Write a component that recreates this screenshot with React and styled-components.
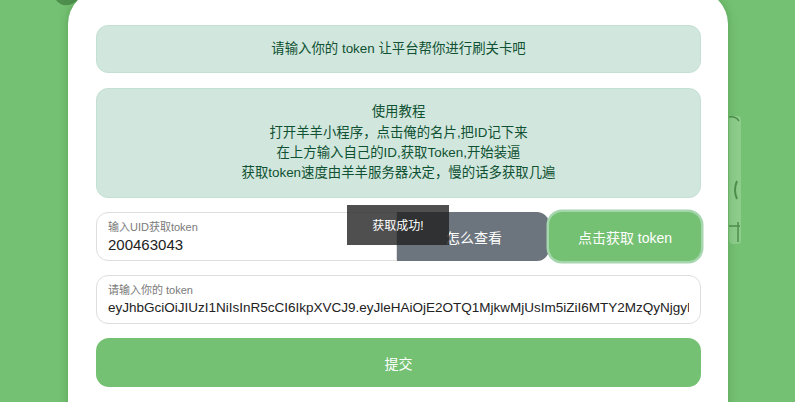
import React from 'react'
import styled, { createGlobalStyle } from 'styled-components'

const GlobalStyle = createGlobalStyle`
    html, body {
        margin: 0;
        padding: 0;
        height: 402px;
        overflow: hidden;
        background: #75c173;
        font-family: "Liberation Sans", "Noto Sans CJK SC", sans-serif;
    }
`

const Page = styled.div`
    position: relative;
    height: 402px;
    overflow: hidden;
    display: flex;
    justify-content: center;
    align-items: flex-start;
`

const Deco = styled.svg`
    position: absolute;
    left: 0;
    top: 0;
    pointer-events: none;
`

const Card = styled.div`
    position: relative;
    flex: 0 0 auto;
    width: 605px;
    margin: -10px 0 0 1px;
    padding: 35px 27px 90px 28px;
    background: #fff;
    border-radius: 34px;
    box-shadow: 0 0 10px rgba(40, 110, 40, 0.35);
    display: flex;
    flex-direction: column;
    gap: 14px;
`

const Alert = styled.div`
    box-sizing: border-box;
    height: ${ props => props.height }px;
    padding: 0 16px;
    background: #d1e7dd;
    border: 1px solid #c4e0d3;
    border-radius: 12px;
    color: #0f5132;
    font-size: 13.4px;
    line-height: 20.4px;
    text-align: center;
    display: flex;
    flex-direction: column;
    justify-content: center;
    margin-bottom: ${ props => props.gapBelow || 0 }px;
`

const Row = styled.div`
    display: flex;
    height: 49px;
    flex: 0 0 49px;
`

const Field = styled.label`
    box-sizing: border-box;
    flex: 1;
    height: 49px;
    padding: 7px 11px 0;
    border: 1px solid #dedede;
    border-radius: ${ props => props.joined ? '12px 0 0 12px' : '12px' };
    display: flex;
    flex-direction: column;
    overflow: hidden;
    background: #fff;
`

const FieldLabel = styled.span`
    font-size: 11px;
    color: #7a7a7a;
    line-height: 14px;
`

const FieldInput = styled.input`
    border: none;
    outline: none;
    padding: 0;
    margin: 1px 0 0;
    width: 100%;
    background: transparent;
    font-family: "Liberation Sans", "Noto Sans CJK SC", sans-serif;
    font-size: ${ props => props.size }px;
    color: #222;
    line-height: 20px;
`

const AddonButton = styled.button`
    flex: 0 0 152px;
    border: none;
    background: #6c757d;
    color: #fff;
    font-family: "Liberation Sans", "Noto Sans CJK SC", sans-serif;
    font-size: 14px;
    border-radius: 0 12px 12px 0;
    padding: 0 0 0 2px;
`

const GreenButton = styled.button`
    flex: ${ props => props.full ? '1' : '0 0 152px' };
    height: 49px;
    border: none;
    background: #75c173;
    color: #fff;
    font-family: "Liberation Sans", "Noto Sans CJK SC", sans-serif;
    font-size: 14px;
    border-radius: 13px;
    padding: 0;
    box-shadow: ${ props => props.focused ? '0 0 0 2.5px #a5d6ae' : 'none' };
`

const Toast = styled.div`
    position: absolute;
    left: 279px;
    top: 215px;
    width: 102px;
    height: 40px;
    background: rgba(30, 30, 30, 0.78);
    color: #fff;
    font-size: 12px;
    display: flex;
    align-items: center;
    justify-content: center;
    padding-bottom: 2px;
    box-sizing: border-box;
`

const token = 'eyJhbGciOiJIUzI1NiIsInR5cCI6IkpXVCJ9.eyJleHAiOjE2OTQ1MjkwMjUsIm5iZiI6MTY2MzQyNjgyNSwiaWF0IjoxNjYzNDI2ODI1fQ'

function App () {
    return (
        <Page>
            <GlobalStyle />
            <Deco width="795" height="402">
                <path d="M56 0 Q62 8 72 4 L78 0 Z" fill="#4f8f4d" />
                <rect x="729" y="116" width="12" height="128" rx="4" fill="#9fd39c" opacity="0.6" />
                <path d="M729 117 Q736 116 739 121" stroke="#4f8f4d" strokeWidth="1.5" fill="none" />
                <path d="M737 181 Q733 190 737 199" stroke="#4f8f4d" strokeWidth="2" fill="none" />
                <path d="M729 226 L740 226 M738 222 L738 242" stroke="#4f8f4d" strokeWidth="1.5" fill="none" />
            </Deco>
            <Card>
                <Alert height={48} gapBelow={1}>
                    请输入你的 token 让平台帮你进行刷关卡吧
                </Alert>
                <Alert height={110}>
                    <div>使用教程</div>
                    <div>打开羊羊小程序，点击俺的名片,把ID记下来</div>
                    <div>在上方输入自己的ID,获取Token,开始装逼</div>
                    <div>获取token速度由羊羊服务器决定，慢的话多获取几遍</div>
                </Alert>
                <Row>
                    <Field joined>
                        <FieldLabel>输入UID获取token</FieldLabel>
                        <FieldInput size={15} defaultValue="200463043" />
                    </Field>
                    <AddonButton>怎么查看</AddonButton>
                    <GreenButton focused>点击获取 token</GreenButton>
                </Row>
                <Row>
                    <Field>
                        <FieldLabel>请输入你的 token</FieldLabel>
                        <FieldInput size={13.5} defaultValue={token} />
                    </Field>
                </Row>
                <Row>
                    <GreenButton full>提交</GreenButton>
                </Row>
                <Toast>获取成功!</Toast>
            </Card>
        </Page>
    )
}

export default App
